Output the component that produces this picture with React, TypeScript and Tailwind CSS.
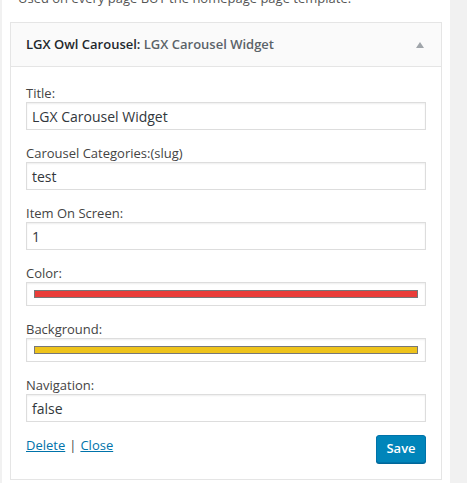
import React from "react";

type Field =
  | { label: string; kind: "text"; value: string }
  | { label: string; kind: "color"; value: string };

const fields: Field[] = [
  { label: "Title:", kind: "text", value: "LGX Carousel Widget" },
  { label: "Carousel Categories:(slug)", kind: "text", value: "test" },
  { label: "Item On Screen:", kind: "text", value: "1" },
  { label: "Color:", kind: "color", value: "#ea3d39" },
  { label: "Background:", kind: "color", value: "#eec31b" },
  { label: "Navigation:", kind: "text", value: "false" },
];

const FormField: React.FC<{ field: Field; last: boolean }> = ({ field, last }) => {
  return (
    <div className={last ? "" : "mb-[14px]"}>
      <label className="block text-[13px] leading-[18px] text-[#444]">{field.label}</label>
      {field.kind === "text" ? (
        <div className="flex h-[28px] items-center border border-[#ddd] px-[5px] text-[14px] text-[#32373c] shadow-[inset_0_1px_2px_rgba(0,0,0,0.07)]">
          {field.value}
        </div>
      ) : (
        <div className="flex h-[24px] items-center border border-[#ddd] px-[7px] shadow-[inset_0_1px_2px_rgba(0,0,0,0.07)]">
          {/* colour swatch bar */}
          <div
            className="h-[8px] w-full border border-[#777]"
            style={{ backgroundColor: field.value }}
          />
        </div>
      )}
    </div>
  );
};

export default function App() {
  return (
    <div
      className="flex h-[483px] w-[467px] overflow-hidden bg-[#f1f1f1]"
      style={{ fontFamily: '"Open Sans", "Liberation Sans", sans-serif' }}
    >
      <div className="ml-[2px] w-[448px] bg-white">
        {/* sidebar description, cut off at the top */}
        <p className="mt-[-11px] pl-[16px] text-[13px] leading-[18px] text-[#555]">
          Used on every page BUT the homepage page template.
        </p>

        <div className="mx-[8px] mt-[15px] border border-[#e5e5e5] bg-white">
          {/* Widget header */}
          <div className="flex h-[44px] items-center justify-between border-b border-[#e5e5e5] bg-[#fafafa] pl-[15px] pr-[17px]">
            <h3 className="text-[13px] font-semibold text-[#23282d]">
              LGX Owl Carousel: <span className="text-[#5b6369]">LGX Carousel Widget</span>
            </h3>
            <span className="h-0 w-0 border-x-[4px] border-b-[6px] border-x-transparent border-b-[#a0a5aa]" />
          </div>

          {/* Widget form */}
          <div className="px-[15px] pb-[16px] pt-[17px]">
            {fields.map((f, i) => (
              <FormField key={f.label} field={f} last={i === fields.length - 1} />
            ))}

            <div className="mt-[13px] flex items-start justify-between">
              <div className="pt-[1px] text-[13px] leading-[18px] text-[#444]">
                <a className="text-[#0073aa] underline">Delete</a>
                <span className="mx-[4px]">|</span>
                <a className="text-[#0073aa] underline">Close</a>
              </div>
              <button className="h-[28px] w-[50px] rounded-[3px] border border-[#0073aa] bg-[#0085ba] text-[13px] font-semibold text-white shadow-[0_1px_0_#006799]">
                Save
              </button>
            </div>
          </div>
        </div>
      </div>
    </div>
  );
}
